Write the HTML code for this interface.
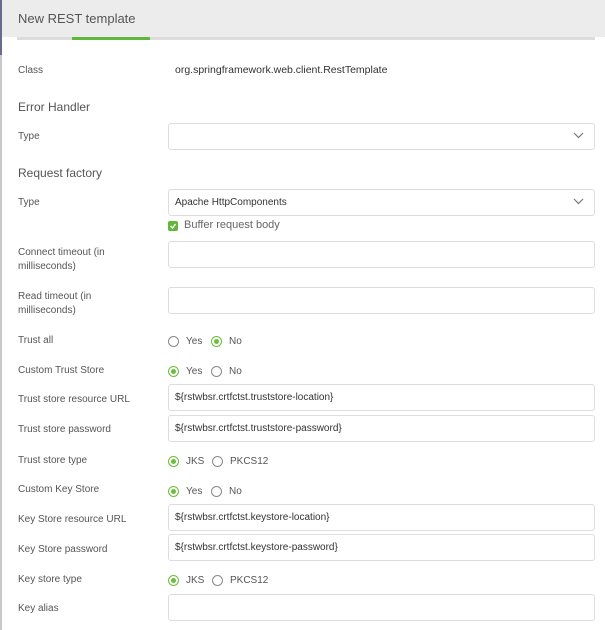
<!DOCTYPE html>
<html><head><style>
*{margin:0;padding:0;box-sizing:border-box}
body{width:605px;height:630px;background:#fff;font-family:"Liberation Sans",sans-serif;color:#444;position:relative;overflow:hidden}
.a{position:absolute;white-space:nowrap}
.l{font-size:10px;color:#555;margin-top:1px}
.h{font-size:12px;color:#555}
.in{position:absolute;left:168px;width:427px;height:27px;border:1px solid #ddd;border-radius:3px;font-size:10px;color:#333;padding:7px 6px 0}
.chev{position:absolute;right:10px;top:8px}
.r{position:absolute;width:11px;height:11px;border:1px solid #888;border-radius:50%;margin-top:1px}
.r.on{border-color:#6abf3b}
.r.on::after{content:"";position:absolute;left:2px;top:2px;width:5px;height:5px;border-radius:50%;background:#6abf3b}
</style></head><body>
<div class="a" style="left:0;top:0;width:605px;height:37px;background:#ececec"></div>
<div class="a" style="left:0;top:0;width:2px;height:630px;background:#c8c8cc"></div>
<div class="a" style="left:0;top:0;width:2px;height:55px;background:#6a6a8a"></div>
<div class="a" style="left:17px;top:37px;width:578px;height:3px;background:#dcdcdc"></div>
<div class="a" style="left:72px;top:37px;width:78px;height:3px;background:#5fb83a"></div>
<div class="a" style="left:18px;top:11px;font-size:13px;color:#555">New REST template</div>

<div class="a l" style="left:18px;top:64px">Class</div>
<div class="a" style="left:175px;top:64px;font-size:10.5px;color:#333">org.springframework.web.client.RestTemplate</div>
<div class="a h" style="left:18px;top:100px">Error Handler</div>
<div class="a l" style="left:18px;top:130px">Type</div>
<div class="in" style="top:123px"><svg class="chev" width="11" height="7"><path d="M1 1l4.5 4.5L10 1" fill="none" stroke="#777" stroke-width="1.2"/></svg></div>
<div class="a h" style="left:18px;top:166px">Request factory</div>
<div class="a l" style="left:18px;top:196px">Type</div>
<div class="in" style="top:189px">Apache HttpComponents<svg class="chev" width="11" height="7"><path d="M1 1l4.5 4.5L10 1" fill="none" stroke="#777" stroke-width="1.2"/></svg></div>
<div class="a" style="left:168px;top:221px;width:10px;height:10px;background:#5fb83a;border-radius:2px"><svg width="10" height="10" style="position:absolute;left:0;top:0"><path d="M2.5 5l2 2 3-4" fill="none" stroke="#fff" stroke-width="1.4"/></svg></div>
<div class="a" style="left:184px;top:219px;font-size:11px;color:#666">Buffer request body</div>
<div class="a l" style="left:18px;top:245px;line-height:14px">Connect timeout (in<br>milliseconds)</div>
<div class="in" style="top:241px"></div>
<div class="a l" style="left:18px;top:289px;line-height:14px">Read timeout (in<br>milliseconds)</div>
<div class="in" style="top:287px"></div>

<div class="a l" style="left:18px;top:334px">Trust all</div>
<div class="r" style="left:168px;top:335px"></div><div class="a l" style="left:186px;top:335px">Yes</div>
<div class="r on" style="left:211px;top:335px"></div><div class="a l" style="left:229px;top:335px">No</div>
<div class="a l" style="left:18px;top:364px">Custom Trust Store</div>
<div class="r on" style="left:168px;top:365px"></div><div class="a l" style="left:186px;top:365px">Yes</div>
<div class="r" style="left:211px;top:365px"></div><div class="a l" style="left:229px;top:365px">No</div>
<div class="a l" style="left:18px;top:393px">Trust store resource URL</div>
<div class="in" style="top:384px">${rstwbsr.crtfctst.truststore-location}</div>
<div class="a l" style="left:18px;top:423px">Trust store password</div>
<div class="in" style="top:415px">${rstwbsr.crtfctst.truststore-password}</div>
<div class="a l" style="left:18px;top:454px">Trust store type</div>
<div class="r on" style="left:168px;top:455px"></div><div class="a l" style="left:186px;top:455px">JKS</div>
<div class="r" style="left:212px;top:455px"></div><div class="a l" style="left:230px;top:455px">PKCS12</div>
<div class="a l" style="left:18px;top:483px">Custom Key Store</div>
<div class="r on" style="left:168px;top:485px"></div><div class="a l" style="left:186px;top:485px">Yes</div>
<div class="r" style="left:211px;top:485px"></div><div class="a l" style="left:229px;top:485px">No</div>
<div class="a l" style="left:18px;top:513px">Key Store resource URL</div>
<div class="in" style="top:504px">${rstwbsr.crtfctst.keystore-location}</div>
<div class="a l" style="left:18px;top:543px">Key Store password</div>
<div class="in" style="top:534px">${rstwbsr.crtfctst.keystore-password}</div>
<div class="a l" style="left:18px;top:573px">Key store type</div>
<div class="r on" style="left:168px;top:574px"></div><div class="a l" style="left:186px;top:574px">JKS</div>
<div class="r" style="left:212px;top:574px"></div><div class="a l" style="left:230px;top:574px">PKCS12</div>
<div class="a l" style="left:18px;top:602px">Key alias</div>
<div class="in" style="top:594px"></div>
</body></html>
